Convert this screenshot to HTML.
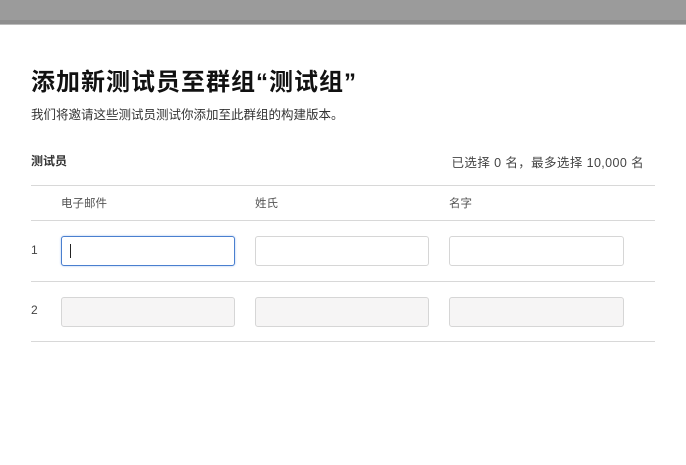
<!DOCTYPE html>
<html><head><meta charset="utf-8"><style>
body{margin:0;width:686px;height:465px;background:#fff;font-family:"Liberation Sans","Noto Sans CJK SC",sans-serif;color:#222;position:relative;overflow:hidden}
.top{position:absolute;left:0;top:0;width:686px;height:20px;background:#9b9b9b}
.top2{position:absolute;left:0;top:20px;width:686px;height:4px;background:#8e8e8e;border-bottom:1px solid #bbb}
.a{position:absolute;white-space:nowrap}
.l{position:absolute;left:31px;width:624px;height:1px;background:#d8d8d8}
.i{position:absolute;width:172px;height:28px;border:1px solid #d6d6d6;border-radius:3px;background:#fff;box-sizing:border-box}
.g{background:#f6f5f5}
</style></head><body>
<div class="top"></div><div class="top2"></div>
<div class="a" style="left:31px;top:62px;font-size:24px;letter-spacing:1px;font-weight:bold;color:#111">添加新测试员至群组“测试组”</div>
<div class="a" style="left:31px;top:104px;font-size:12.5px;color:#333">我们将邀请这些测试员测试你添加至此群组的构建版本。</div>
<div class="a" style="left:31px;top:152px;font-size:12px;font-weight:bold;color:#333">测试员</div>
<div class="a" style="right:42px;top:152px;font-size:12.5px;letter-spacing:0.4px;color:#444">已选择 0 名，最多选择 10,000 名</div>
<div class="l" style="top:185px"></div>
<div class="a" style="left:61px;top:195px;font-size:11.5px;color:#555">电子邮件</div>
<div class="a" style="left:255px;top:195px;font-size:11.5px;color:#555">姓氏</div>
<div class="a" style="left:449px;top:195px;font-size:11.5px;color:#555">名字</div>
<div class="l" style="top:220px"></div>
<div class="a" style="left:31px;top:243px;font-size:12px;color:#444">1</div>
<div class="i" style="left:61px;top:236px;width:174px;height:30px;border:1.5px solid #4a7fcf;box-shadow:0 0 2px #a9c4ee"><div style="position:absolute;left:8px;top:7px;width:1px;height:14px;background:#222"></div></div>
<div class="i" style="left:255px;top:236px;width:174px;height:30px"></div>
<div class="i" style="left:449px;top:236px;width:175px;height:30px"></div>
<div class="l" style="top:281px"></div>
<div class="a" style="left:31px;top:303px;font-size:12px;color:#444">2</div>
<div class="i g" style="left:61px;top:297px;width:174px;height:30px"></div>
<div class="i g" style="left:255px;top:297px;width:174px;height:30px"></div>
<div class="i g" style="left:449px;top:297px;width:175px;height:30px"></div>
<div class="l" style="top:341px"></div>
</body></html>
